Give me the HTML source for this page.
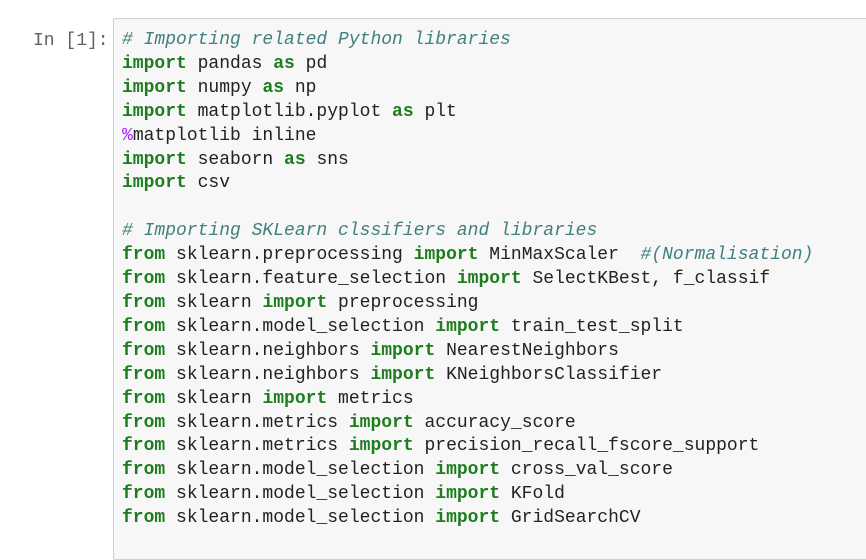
<!DOCTYPE html>
<html style="overflow:hidden"><head><meta charset="utf-8"><style>
html,body{margin:0;width:866px;height:550px;overflow:hidden;background:#fff;font-family:"Liberation Mono",monospace;}
.p{position:absolute;left:33px;top:29px;font-size:18px;line-height:24px;color:#616161;}
.box{position:absolute;left:113px;top:18px;width:770px;height:540px;background:#f7f7f7;border:1px solid #cfcfcf;border-radius:2px;}
pre{position:absolute;left:122px;top:29px;margin:0;font-family:"Liberation Mono",monospace;font-size:18px;line-height:23.9px;color:#222;}
.c{color:#408080;font-style:italic}
.k{color:#1e7d1e;font-weight:bold}
.m{color:#aa22ff}
</style></head><body>
<div class="p">In [1]:</div>
<div class="box"></div>
<pre><span class="c"># Importing related Python libraries</span>
<span class="k">import</span> pandas <span class="k">as</span> pd
<span class="k">import</span> numpy <span class="k">as</span> np
<span class="k">import</span> matplotlib.pyplot <span class="k">as</span> plt
<span class="m">%</span>matplotlib inline
<span class="k">import</span> seaborn <span class="k">as</span> sns
<span class="k">import</span> csv

<span class="c"># Importing SKLearn clssifiers and libraries</span>
<span class="k">from</span> sklearn.preprocessing <span class="k">import</span> MinMaxScaler  <span class="c">#(Normalisation)</span>
<span class="k">from</span> sklearn.feature_selection <span class="k">import</span> SelectKBest, f_classif
<span class="k">from</span> sklearn <span class="k">import</span> preprocessing
<span class="k">from</span> sklearn.model_selection <span class="k">import</span> train_test_split
<span class="k">from</span> sklearn.neighbors <span class="k">import</span> NearestNeighbors
<span class="k">from</span> sklearn.neighbors <span class="k">import</span> KNeighborsClassifier
<span class="k">from</span> sklearn <span class="k">import</span> metrics
<span class="k">from</span> sklearn.metrics <span class="k">import</span> accuracy_score
<span class="k">from</span> sklearn.metrics <span class="k">import</span> precision_recall_fscore_support
<span class="k">from</span> sklearn.model_selection <span class="k">import</span> cross_val_score
<span class="k">from</span> sklearn.model_selection <span class="k">import</span> KFold
<span class="k">from</span> sklearn.model_selection <span class="k">import</span> GridSearchCV</pre>
</body></html>
